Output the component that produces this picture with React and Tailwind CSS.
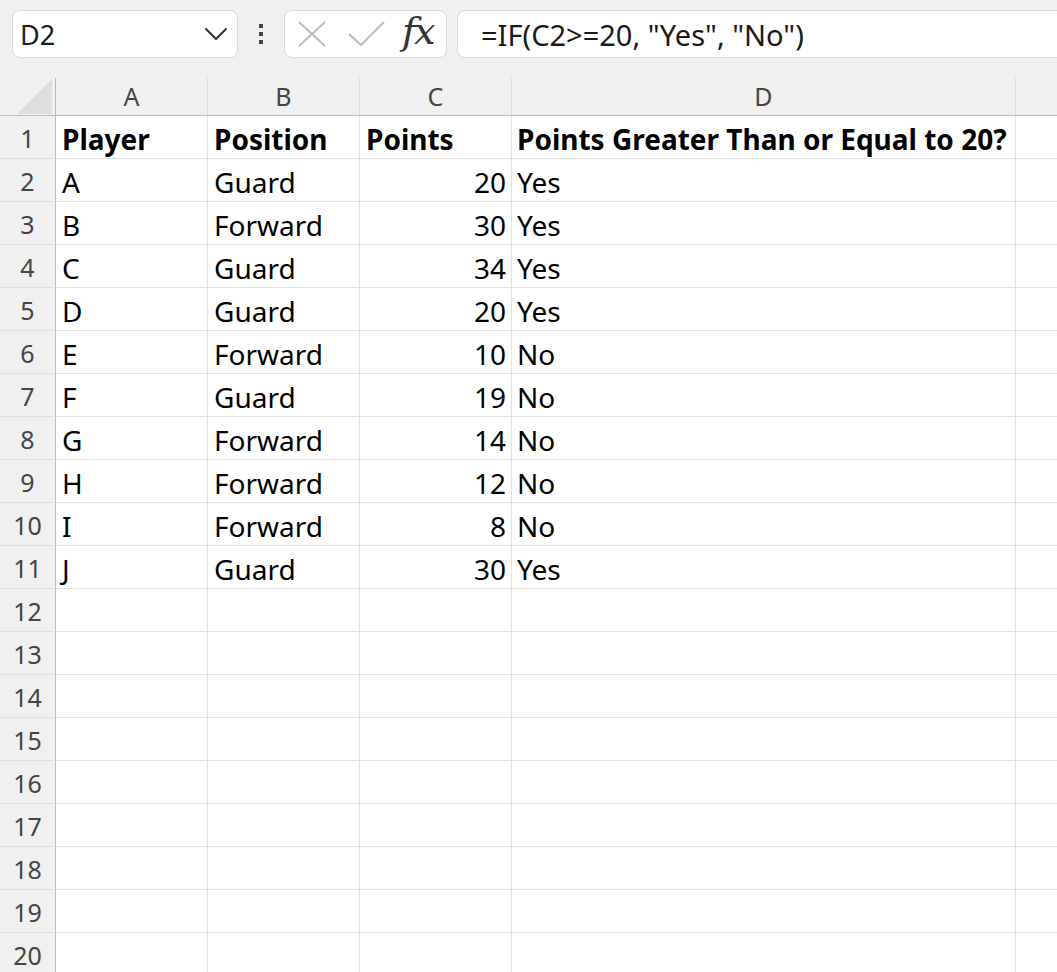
import React from 'react'

const rows = [
  ['A', 'Guard', 20, 'Yes'],
  ['B', 'Forward', 30, 'Yes'],
  ['C', 'Guard', 34, 'Yes'],
  ['D', 'Guard', 20, 'Yes'],
  ['E', 'Forward', 10, 'No'],
  ['F', 'Guard', 19, 'No'],
  ['G', 'Forward', 14, 'No'],
  ['H', 'Forward', 12, 'No'],
  ['I', 'Forward', 8, 'No'],
  ['J', 'Guard', 30, 'Yes'],
]

const cols = ['A', 'B', 'C', 'D']
const gridCols = 'grid grid-cols-[56px_152px_152px_152px_504px_1fr]'

function Toolbar() {
  return (
    <div className="h-[78px] bg-[#f0f0f0] flex items-start pt-[10px] pl-[12px]">
      {/* name box */}
      <div className="w-[226px] h-[48px] rounded-[8px] border border-[#dadada] bg-white flex items-center justify-between pl-[7px] pr-[9px]">
        <span className="text-[27px] text-[#1a1a1a] leading-none">D2</span>
        <svg width="24" height="14" viewBox="0 0 24 14" fill="none">
          <path d="M2 2 L12 12 L22 2" stroke="#333" strokeWidth="2" strokeLinecap="round" strokeLinejoin="round" />
        </svg>
      </div>
      {/* dots */}
      <div className="w-[46px] h-[48px] flex flex-col items-center justify-center gap-[4px]">
        <div className="w-[4px] h-[4px] bg-[#444]" />
        <div className="w-[4px] h-[4px] bg-[#444]" />
        <div className="w-[4px] h-[4px] bg-[#444]" />
      </div>
      {/* cancel / enter / fx */}
      <div className="w-[163px] h-[48px] rounded-[8px] border border-[#dadada] bg-white flex items-center pl-[13px]">
        <svg width="28" height="26" viewBox="0 0 28 26" fill="none">
          <path d="M1 1 L27 25 M27 1 L1 25" stroke="#bdbdbd" strokeWidth="2" />
        </svg>
        <svg className="ml-[22px]" width="37" height="26" viewBox="0 0 37 26" fill="none">
          <path d="M1 13 L13 24 L36 1" stroke="#bdbdbd" strokeWidth="2" />
        </svg>
        <span className="ml-[17px] text-[38px] leading-none italic text-[#333] font-['DejaVu_Serif',serif] -mt-[6px] tracking-[-2px]">
          fx
        </span>
      </div>
      {/* formula bar */}
      <div className="ml-[10px] flex-1 h-[48px] rounded-l-[8px] border border-r-0 border-[#dadada] bg-white flex items-center pl-[23px]">
        <span className="text-[29px] text-[#1a1a1a] leading-none">=IF(C2&gt;=20, "Yes", "No")</span>
      </div>
    </div>
  )
}

function HeaderRow() {
  return (
    <div className={`${gridCols} h-[38px] bg-[#f0f0f0] border-b border-[#bcbcbc]`}>
      <div className="relative border-r border-[#bcbcbc]">
        <svg className="absolute left-[17px] top-[1px]" width="35" height="35" viewBox="0 0 35 35">
          <path d="M35 0 L35 35 L0 35 Z" fill="#dedede" />
        </svg>
      </div>
      {cols.map((c) => (
        <div key={c} className="border-r border-[#dcdcdc] flex items-center justify-center text-[25px] text-[#444] leading-none">
          {c}
        </div>
      ))}
      <div />
    </div>
  )
}

function Row({ n, data, bold }) {
  const cell = 'border-r border-b border-[#e1e1e1] h-[43px] flex items-center pt-[3px] leading-none text-[28px] text-black whitespace-nowrap overflow-visible'
  return (
    <div className={gridCols}>
      <div className="h-[43px] bg-[#f0f0f0] border-r border-[#bcbcbc] border-b border-b-[#dedede] flex items-center justify-center pt-[2px] text-[25px] text-[#444] leading-none">
        {n}
      </div>
      <div className={`${cell} pl-[6px] ${bold ? 'font-bold' : ''}`}>{data ? data[0] : ''}</div>
      <div className={`${cell} pl-[6px] ${bold ? 'font-bold' : ''}`}>{data ? data[1] : ''}</div>
      <div className={`${cell} ${bold ? 'pl-[6px] font-bold' : 'justify-end pr-[5px]'}`}>{data ? data[2] : ''}</div>
      <div className={`${cell} pl-[5px] ${bold ? 'font-bold' : ''}`}>{data ? data[3] : ''}</div>
      <div className="border-b border-[#e1e1e1] h-[43px]" />
    </div>
  )
}

export default function App() {
  const all = []
  for (let i = 1; i <= 20; i++) {
    if (i === 1) all.push(<Row key={i} n={i} bold data={['Player', 'Position', 'Points', 'Points Greater Than or Equal to 20?']} />)
    else all.push(<Row key={i} n={i} data={rows[i - 2]} />)
  }
  return (
    <div className="w-[1057px] h-[972px] overflow-hidden bg-white font-['Noto_Sans','Open_Sans',sans-serif]">
      <Toolbar />
      <HeaderRow />
      {all}
    </div>
  )
}
